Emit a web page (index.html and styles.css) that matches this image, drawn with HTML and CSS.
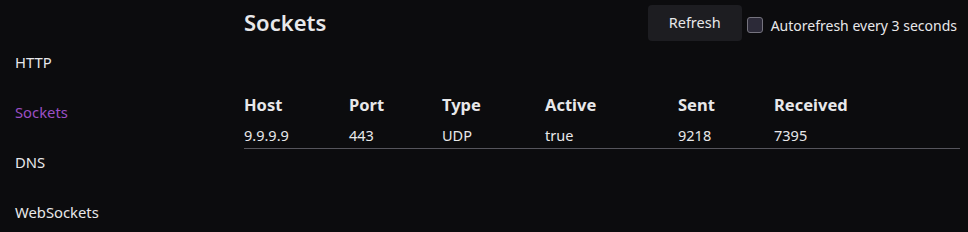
FILE: index.html
```html
<!DOCTYPE html>
<html lang="en">
<head>
  <meta charset="UTF-8">
  <title>Sockets</title>
  <link rel="stylesheet" href="styles.css">
</head>
<body>
  <div class="app">
    <!-- Left nav -->
    <nav class="sidebar">
      <a href="#" class="nav-item">HTTP</a>
      <a href="#" class="nav-item active">Sockets</a>
      <a href="#" class="nav-item">DNS</a>
      <a href="#" class="nav-item">WebSockets</a>
    </nav>

    <main class="main">
      <div class="top-bar">
        <h1 class="page-title">Sockets</h1>
        <div class="controls">
          <button class="refresh-btn">Refresh</button>
          <label class="auto">
            <input type="checkbox" class="auto-check">
            <span>Autorefresh every 3 seconds</span>
          </label>
        </div>
      </div>

      <table class="sockets">
        <thead>
          <tr>
            <th class="col-host">Host</th>
            <th class="col-port">Port</th>
            <th class="col-type">Type</th>
            <th class="col-active">Active</th>
            <th class="col-sent">Sent</th>
            <th>Received</th>
          </tr>
        </thead>
        <tbody>
          <tr>
            <td>9.9.9.9</td>
            <td>443</td>
            <td>UDP</td>
            <td>true</td>
            <td>9218</td>
            <td>7395</td>
          </tr>
        </tbody>
      </table>
    </main>
  </div>
</body>
</html>
```

FILE: styles.css
```css
body, html {
  margin: 0;
  padding: 0;
  height: 100%;
  overflow: hidden;
  background: #0c0c0e;
  color: #e8e8ea;
  font-family: "Noto Sans", "Open Sans", sans-serif;
}

.app {
  display: flex;
  height: 100%;
}

/* Left nav */
.sidebar {
  width: 229px;
  padding: 50px 0 0 15px;
  display: flex;
  flex-direction: column;
  gap: 26px;
}

.nav-item {
  line-height: 24px;
  color: #e8e8ea;
  text-decoration: none;
  font-size: 14.8px;
}

.nav-item.active {
  color: #9b4fc4;
}

/* Main area */
.main {
  flex: 1;
  padding-right: 8px;
}

.top-bar {
  display: flex;
  justify-content: space-between;
  align-items: flex-start;
  height: 90px;
}

.page-title {
  margin: 6px 0 0;
  font-size: 22px;
  font-weight: 600;
  line-height: 32px;
}

.controls {
  display: flex;
  align-items: center;
  margin-top: 5px;
  margin-right: 3px;
}

.refresh-btn {
  width: 94px;
  height: 36px;
  background: #1d1d21;
  color: #e8e8ea;
  border: none;
  border-radius: 4px;
  font-family: inherit;
  font-size: 14.5px;
  padding: 0 0 3px;
}

.auto {
  display: flex;
  align-items: center;
  margin-left: 5px;
  font-size: 14px;
  padding-top: 4px;
}

.auto-check {
  appearance: none;
  width: 16px;
  height: 16px;
  margin: 0 8px 0 0;
  background: #2c2a38;
  border: 1px solid #75737e;
  border-radius: 3px;
}

/* Table */
.sockets {
  width: 100%;
  border-collapse: collapse;
}

.sockets th {
  text-align: left;
  font-size: 16.5px;
  font-weight: 700;
  padding: 0;
  height: 28px;
}

.sockets td {
  font-size: 14.5px;
  padding: 4px 0 0;
  height: 26px;
  border-bottom: 1px solid #56555c;
}

.col-host { width: 105px; }
.col-port { width: 93px; }
.col-type { width: 103px; }
.col-active { width: 133px; }
.col-sent { width: 96px; }
```
